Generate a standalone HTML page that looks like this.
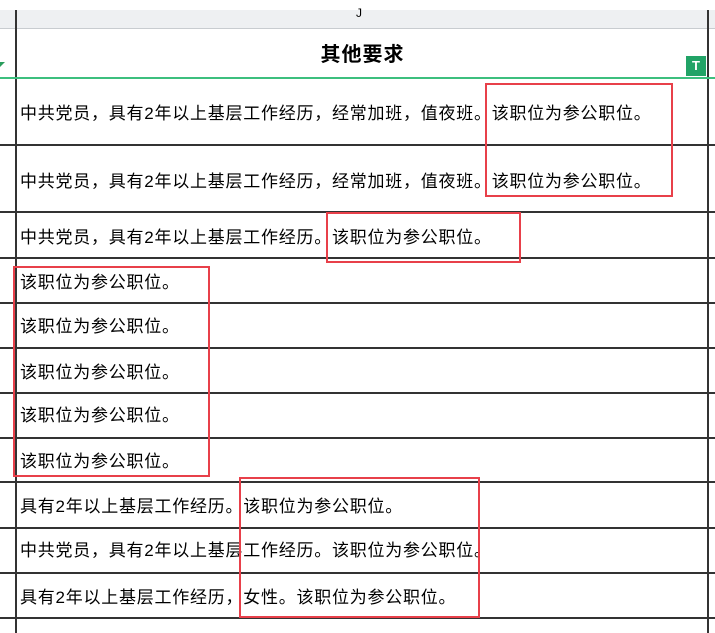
<!DOCTYPE html>
<html><head><meta charset="utf-8"><style>
body{margin:0;width:715px;height:633px;background:#fff;position:relative;overflow:hidden;font-family:"Liberation Sans","Noto Sans CJK SC",sans-serif;color:#000}
.hl{position:absolute;left:0;width:715px;height:2px;background:#333}
.t{position:absolute;left:20px;font-size:17px;letter-spacing:0.75px;line-height:20px;white-space:nowrap}
.r{position:absolute;border:2px solid #e8404a;box-sizing:border-box}
</style></head><body>
<div style="position:absolute;left:0;top:10px;width:715px;height:18px;background:#eef0f2;border-bottom:1px solid #c8ccd0"></div>
<div style="position:absolute;left:356px;top:6px;font-size:12px">J</div>
<div style="position:absolute;left:15px;top:10px;width:2px;height:623px;background:#333"></div>
<div style="position:absolute;left:707px;top:10px;width:2px;height:623px;background:#333"></div>
<div style="position:absolute;left:0;top:38px;width:715px;text-align:center;font-size:20px;font-weight:bold;padding-left:10px;box-sizing:border-box;letter-spacing:1px">其他要求</div>
<div style="position:absolute;left:0;top:62px;width:0;height:0;border-left:5px solid #2a9d5c;border-bottom:5px solid transparent"></div>
<div style="position:absolute;left:686px;top:56px;width:20px;height:20px;background:#21a366;color:#fff;font-size:13px;font-weight:bold;text-align:center;line-height:20px">T</div>
<div style="position:absolute;left:0;top:77px;width:715px;height:2px;background:#3cbf7e"></div>
<div class="hl" style="top:144px"></div>
<div class="hl" style="top:211px"></div>
<div class="hl" style="top:257px"></div>
<div class="hl" style="top:302px"></div>
<div class="hl" style="top:347px"></div>
<div class="hl" style="top:392px"></div>
<div class="hl" style="top:437px"></div>
<div class="hl" style="top:481px"></div>
<div class="hl" style="top:527px"></div>
<div class="hl" style="top:572px"></div>
<div class="hl" style="top:617px"></div>
<div class="t" style="top:104px">中共党员，具有2年以上基层工作经历，经常加班，值夜班。该职位为参公职位。</div>
<div class="t" style="top:172px">中共党员，具有2年以上基层工作经历，经常加班，值夜班。该职位为参公职位。</div>
<div class="t" style="top:228px">中共党员，具有2年以上基层工作经历。该职位为参公职位。</div>
<div class="t" style="top:273px">该职位为参公职位。</div>
<div class="t" style="top:317px">该职位为参公职位。</div>
<div class="t" style="top:363px">该职位为参公职位。</div>
<div class="t" style="top:406px">该职位为参公职位。</div>
<div class="t" style="top:452px">该职位为参公职位。</div>
<div class="t" style="top:497px">具有2年以上基层工作经历。该职位为参公职位。</div>
<div class="t" style="top:541px">中共党员，具有2年以上基层工作经历。该职位为参公职位。</div>
<div class="t" style="top:588px">具有2年以上基层工作经历，女性。该职位为参公职位。</div>
<div class="r" style="left:485px;top:83px;width:188px;height:114px"></div>
<div class="r" style="left:326px;top:212px;width:195px;height:51px"></div>
<div class="r" style="left:13px;top:266px;width:197px;height:211px"></div>
<div class="r" style="left:239px;top:477px;width:241px;height:141px"></div>
</body></html>
